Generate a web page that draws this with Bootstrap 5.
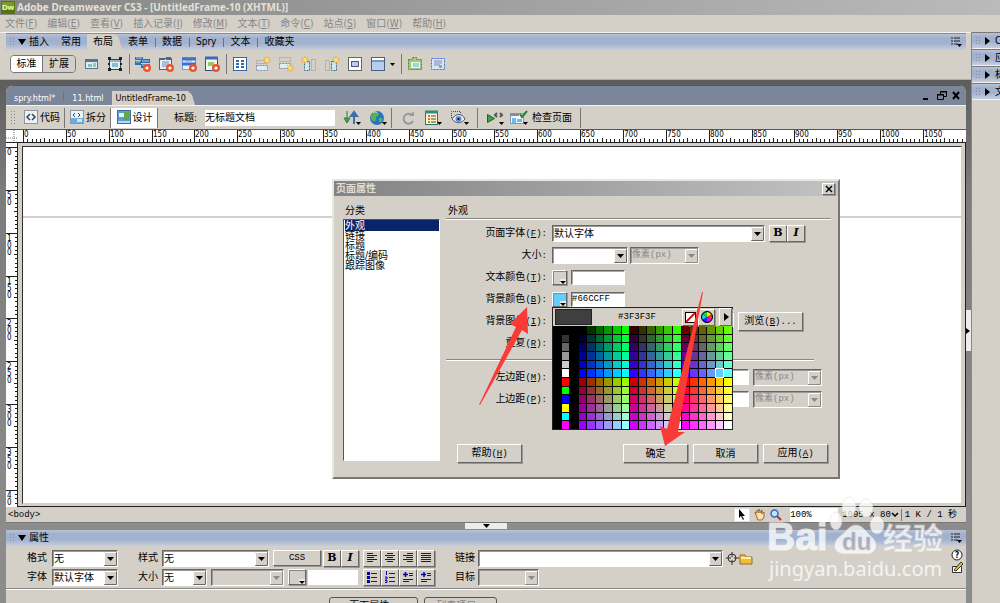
<!DOCTYPE html>
<html lang="zh-CN">
<head>
<meta charset="utf-8">
<meta name="viewport" content="width=device-width, initial-scale=1">
<title>Adobe Dreamweaver CS3</title>
<link rel="stylesheet" href="https://cdn.jsdelivr.net/npm/bootstrap@5.3.0/dist/css/bootstrap.min.css">
<style>
:root{--face:#d4d0c8;--blue:linear-gradient(#b9c3d6,#a1b0cc 25%,#a3b2ce 60%,#c5cee0)}
body{font:10px/14px "DejaVu Sans Condensed","Noto Sans CJK SC",sans-serif;color:#000;background:var(--face);height:100vh;min-width:1000px;overflow:hidden}
button,input,select{font:inherit;line-height:14px;color:#000;padding:0;border-radius:0}
svg{display:block;flex:none}
.mn{font-family:"Liberation Mono","Noto Sans CJK SC",monospace;font-size:9px}
.app-title{height:15px;background:linear-gradient(90deg,#868686,#bababa);color:#e4e1da;font:bold 10px/15px "Noto Sans",sans-serif}
.app-menu{height:17px;gap:10px;padding-left:5px}
.app-menu a{color:#868686;text-decoration:none}
.grip{width:5px;height:10px;background:radial-gradient(circle,#7f8ba3 1px,transparent 1px) 0 0/3px 3px}
.grip.tall{height:16px}
.bar-blue{height:17px;background:var(--blue);border-top:1px solid #8b8b8b}
.panel-name{gap:3px;padding:0 6px 0 3px}
.insert-wrap{border-top:1px solid #f4f2ee;border-bottom:1px solid #b2aea6;padding:0 5px 0 6px}
.insert-tools{height:27px;gap:7px;margin-bottom:2px}
.insert-tools .tool-sep{margin:0 -2px 0 -1px}
.ptab{padding:0 6px;color:#000;text-decoration:none;line-height:16px;height:16px}
.ptab.slant{padding-right:9px}
.bar-sep{width:1px;height:9px;background:#68738a}
.bar-blue .bar-sep{margin:0 0 0 1px}
.slant{background:var(--face);clip-path:polygon(0 0,calc(100% - 7px) 0,calc(100% - 3px) 4px,100% 100%,0 100%)}
.pill-group{border:1px solid #777;border-radius:4px;overflow:hidden;margin-right:1px}
.pill-group button{border:0;width:32px;height:16px;background:var(--face)}
.pill-group button.on{background:#fff;border-right:1px solid #777}
.tool-sep{width:1px;height:20px;background:#777}
.icon-btn{border:0;background:none;width:16px;height:16px}
.workspace{background:linear-gradient(#5d5d5d,#7c7c7c 25%,#8c8c8c);padding:5px 5px 0 6px}
.doc{background:var(--face);border-radius:8px 8px 0 0;overflow:hidden}
.doc-tabs{background:#7b869b;height:20px;color:#fff;border-top:1px solid #555}
.doc-tabs a{color:#fff;text-decoration:none;font-size:9px;line-height:14px}
.doc-tabs a.slant{color:#000;padding:0 9px 0 4px;height:14px}
.doc-tools{height:24px;border-top:1px solid #f4f2ee}
.view-btn{border:0;border-right:1px solid #777;background:var(--face);height:20px;width:46px;gap:1px}
.view-btn.on{background:#fff;width:47px}
.title-box{width:130px;height:16px;border:0;background:#fff;padding-bottom:3px}
.ruler-h{height:14px;background:#fff;border-top:1px solid #555;border-bottom:1px solid #222}
.ruler-v{width:12px;background:#fff;flex:none;border-right:1px solid #222}
.canvas{border:1px solid #222;border-color:#333 var(--face) var(--face) #333;margin:3px 3px 2px 4px}
.canvas-edge{border-right:1px solid #222;border-bottom:1px solid #222;background:var(--face)}
.frame-top{height:71px;border-bottom:2px solid var(--face)}
.status{height:16px;border-bottom:1px solid #777}
.handle-h{width:42px;height:6px;background:#ececec}
.handle-v{position:absolute;right:0;top:230px;width:6px;height:41px;background:#ececec;color:#000}
.side{width:29px;background:var(--face);border-left:1px solid #888;overflow:hidden}
.side button{width:100%;border:0;border-top:1px solid #777;border-bottom:1px solid #f4f2ee;height:17px;background:var(--blue);gap:5px;padding-left:3px;white-space:nowrap}
/* classic bevelled controls */
.raised,.box3{border:1px solid;border-color:#fff #666 #666 #fff;background:var(--face);box-shadow:1px 1px 0 #999}
.box3{border-color:#666 #fff #fff #666;background:#fff;box-shadow:inset 1px 1px 0 #aaa}
.combo{appearance:none;border:1px solid;border-color:#666 #fff #fff #666;box-shadow:inset 1px 1px 0 #999;height:17px;line-height:13px;padding-left:1px;background:#fff url("data:image/svg+xml,%3Csvg xmlns='http://www.w3.org/2000/svg' width='13' height='14'%3E%3Cpath fill='%23d4d0c8' stroke='%23666' d='M.5.5h12v13H.5z'/%3E%3Cpath fill='none' stroke='%23fff' d='M.5 13V.5H12'/%3E%3Cpath d='M3 5h7L6.5 9z'/%3E%3C/svg%3E") right 0 top 1px no-repeat}
.combo:disabled{opacity:1;color:#888;background-color:var(--face);background-image:url("data:image/svg+xml,%3Csvg xmlns='http://www.w3.org/2000/svg' width='13' height='14'%3E%3Cpath fill='%23d4d0c8' stroke='%23888' d='M.5.5h12v13H.5z'/%3E%3Cpath fill='none' stroke='%23fff' d='M.5 13V.5H12'/%3E%3Cpath fill='%23888' d='M3 5h7L6.5 9z'/%3E%3C/svg%3E")}
.bi-btn{width:18px;height:17px;font:bold 11px/14px "DejaVu Serif","Liberation Serif",serif}
.swatch-btn{width:15px;height:15px;position:relative;background:var(--sw,var(--face));box-shadow:inset 1px 1px 0 #888,1px 1px 0 #999}
.swatch-btn::after{content:"";position:absolute;right:0;bottom:0;width:6px;height:5px;background:#eceae5}
.swatch-btn::before{content:"";position:absolute;z-index:1;right:0;bottom:0;border:3px solid transparent;border-top-color:#000;border-bottom:0}
/* page properties dialog */
.dlg{position:absolute;left:326px;top:36px;width:508px;border:2px solid;border-color:#e8e6e1 #777 #777 #e8e6e1;background:var(--face)}
.dlg-title{height:15px;background:linear-gradient(90deg,#838383,#c2c2c2);color:#e0ddd6;font-weight:bold;line-height:15px;padding:0 3px 0 2px}
.dlg-close{width:13px;height:12px}
.dlg-body{padding:8px 7px 0 9px;gap:6px}
.cap{padding-left:2px}
.cats{width:97px;height:242px;background:#fff;border:1px solid;border-color:#555 #fff #fff #555;padding:0 0 0 1px}
.cats button{border:0;padding:0;background:none;height:10px;line-height:10px;text-align:left}
.cats button.active{background:#0a246a;color:#fff;height:11px}
.rule{height:2px;border-top:1px solid #888;border-bottom:1px solid #fff}
.form-line{display:grid;grid-template-columns:101px 1fr;column-gap:5px;height:22px;align-items:center}
.form-line>label{text-align:right}
.dlg-btn{width:65px;height:19px;line-height:16px}
.pal{position:absolute;left:218px;top:126px;width:181px;border:1px solid #222;background:var(--face);z-index:2}
.pal-head{height:18px;padding-left:2px}
.pal-grid{background:#000;display:grid;grid-template-columns:repeat(21,1fr);grid-template-rows:repeat(12,1fr);gap:1px;height:103px}
.pal-grid .sel{outline:1px solid #fff}
.arrows{position:absolute;left:139px;top:111px;z-index:3;pointer-events:none}
/* properties panel */
.props{margin:0 5px -17px 6px;background:var(--face)}
.props-wrap{background:#8c8c8c;flex:none}
.pgrid{display:grid;grid-template-rows:18px 18px;row-gap:1px;align-items:center}
.rbtn{height:17px;border-radius:3px;border:1px solid #555;background:var(--face)}
.brand{position:absolute;right:53px;bottom:19px;width:180px;opacity:.75;z-index:5;pointer-events:none}
</style>
</head>
<body class="d-flex flex-column position-relative">
<svg width="0" height="0" class="position-absolute" aria-hidden="true">
<defs>
<g id="plus"><circle cx="12" cy="12" r="4" fill="#e8552f"/><circle cx="12" cy="12" r="1.6" fill="#fff"/></g>
<g id="star"><path d="M12 0v8M8 4h8M9 1l6 6M15 1L9 7" stroke="#e9a93a"/><circle cx="12" cy="4" r="2" fill="#ffe06a"/></g>
<g id="menuico"><path d="M0 1h2M0 4h2M0 7h2M3 1h6M3 4h6M3 7h4" stroke="#222"/><path d="M6 7h5L8.500 10z"/></g>
</defs></svg>

<header class="app-title d-flex align-items-center flex-shrink-0">
<svg width="15" height="14" viewBox="0 0 15 14"><rect x="1" width="14" height="13" fill="#55750e"/><rect x="2" y="1" width="12" height="7" fill="#7d9b1e"/><text x="2" y="9" font-family="Liberation Sans" font-size="8" font-weight="bold" fill="#f1ffb5">Dw</text></svg>
<span style="margin-left:2px">Adobe Dreamweaver CS3 - [UntitledFrame-10 (XHTML)]</span></header>
<nav class="app-menu d-flex align-items-center flex-shrink-0" id="menu"></nav>

<div class="d-flex flex-grow-1" style="min-height:0">
<main class="flex-grow-1 d-flex flex-column" style="min-width:0">
<section class="insert-wrap flex-shrink-0">
 <div class="bar-blue d-flex align-items-center">
  <div class="panel-name d-flex align-items-center"><span class="grip"></span><svg width="9" height="6"><path d="M1 0h8L5 6z"/></svg><span>插入</span></div>
  <a href="#" class="ptab">常用</a>
  <a href="#" class="ptab slant">布局</a>
  <a href="#" class="ptab">表单</a><i class="bar-sep"></i>
  <a href="#" class="ptab">数据</a><i class="bar-sep"></i>
  <a href="#" class="ptab">Spry</a><i class="bar-sep"></i>
  <a href="#" class="ptab">文本</a><i class="bar-sep"></i>
  <a href="#" class="ptab">收藏夹</a>
  <svg class="ms-auto me-1" width="11" height="10"><use href="#menuico"/></svg>
 </div>
 <div class="insert-tools d-flex align-items-center ps-1">
  <div class="pill-group d-flex"><button class="on">标准</button><button>扩展</button></div>
  <svg width="16" height="16"><rect x="1.500" y="3.500" width="12" height="9" fill="#dff0f5" stroke="#55768b"/><path d="M2 5h11" stroke="#55768b" stroke-width="2"/><path d="M4 8h4v3H4z" fill="#7fc2d0"/><path d="M9 8h3M9 10h3" stroke="#689a42"/></svg>
  <svg width="16" height="16"><rect x="2.500" y="3.500" width="11" height="10" fill="#dff0f5" stroke="#345"/><path d="M1 1h3v3H1zM12 1h3v3h-3zM1 12h3v3H1zM12 12h3v3h-3zM1 7h2v2H1zM13 7h2v2h-2z" fill="#222"/><path d="M5 7h6v4H5z" fill="#86bfca"/><path d="M3 5h10" stroke="#55768b"/></svg>
  <i class="tool-sep"></i>
  <svg width="16" height="16"><path fill="#2d6da6" d="M0 1h8v3H0zM6 3h9v4H6zM0 5h6v4H0zM6 8h9v4H6z"/><path d="M1 2h6M1 6h4M7 5h7M7 9h7" stroke="#a8d3f5"/><use href="#plus"/></svg>
  <svg width="16" height="16"><rect x="1.500" y="2.500" width="12" height="11" fill="#e5edf6" stroke="#456393"/><path d="M2 2h5v2H2zM8 1h5v3H8z" fill="#567"/><path d="M4 6h7M4 8h7M4 10h5" stroke="#7390bb"/><use href="#plus"/></svg>
  <svg width="16" height="16"><rect x="1.500" y="1.500" width="13" height="12" fill="#eaf2fd" stroke="#6d9be0"/><path d="M1 3h14M1 8h14" stroke="#3b71c9" stroke-width="3"/><path d="M4 5h7" stroke="#69b"/><use href="#plus"/></svg>
  <svg width="16" height="16"><rect x="1.500" y="1.500" width="12" height="13" fill="#eef5ea" stroke="#2e4f8e"/><path d="M1 2h13" stroke="#3d6ac0" stroke-width="3"/><path d="M4 6h6v4H4z" fill="#9dc46b"/><use href="#plus"/></svg>
  <i class="tool-sep"></i>
  <svg width="16" height="16"><rect x="1.500" y="1.500" width="13" height="13" fill="#fff" stroke="#3568ab"/><path d="M4 5h3M9 5h3M4 8h3M9 8h3M4 11h3M9 11h3" stroke="#3568ab" stroke-width="2"/></svg>
  <svg width="16" height="16"><path d="M1.500 4.500h9v3h-9z" fill="none" stroke="#999" stroke-dasharray="1"/><path d="M1.500 9.500h11v5h-11z" fill="#dbeef4" stroke="#88a" stroke-dasharray="2 1"/><use href="#star"/></svg>
  <svg width="16" height="16"><path d="M1.500 1.500h11v4h-11z" fill="none" stroke="#999" stroke-dasharray="1"/><path d="M1.500 7.500h11v5h-11z" fill="#dbeef4" stroke="#88a" stroke-dasharray="2 1"/><use href="#star" y="8"/></svg>
  <svg width="16" height="16"><path d="M10.500 3.500h4v11h-4z" fill="none" stroke="#999" stroke-dasharray="1"/><path d="M3.500 5.500h5v9h-5z" fill="#c7eaf4" stroke="#567" stroke-dasharray="2 1"/><use href="#star" x="-8"/></svg>
  <svg width="16" height="16"><path d="M1.500 4.500h4v10h-4z" fill="none" stroke="#999" stroke-dasharray="1"/><path d="M7.500 5.500h5v9h-5z" fill="#c7eaf4" stroke="#567" stroke-dasharray="2 1"/><use href="#star"/></svg>
  <svg width="16" height="16"><rect x="1.500" y="1.500" width="13" height="13" fill="#fff" stroke="#666"/><rect x="4.500" y="5.500" width="7" height="5" fill="#b6cdf1" stroke="#557"/></svg>
  <svg width="25" height="16"><rect x="1.500" y="1.500" width="13" height="13" fill="#b4cdf1" stroke="#4a5f85"/><path d="M2 3h12" stroke="#fff" stroke-width="2"/><path d="M1 5h14" stroke="#4a5f85"/><path d="M20 7h5l-2.500 3z"/></svg>
  <i class="tool-sep"></i>
  <svg width="16" height="16"><path d="M1.500 3.500h4v-2h4v2h5v10h-13z" fill="#a4c97c" stroke="#55822f" stroke-dasharray="2 1"/><path d="M4 6h9v6H4z" fill="#dff7f7"/><path d="M6 8h6M6 10h6" stroke="#65aebc"/></svg>
  <svg width="16" height="16"><path d="M1.500 2.500h13v11h-13z" fill="#d9e4f8" stroke="#3d6ee6" stroke-dasharray="2 1"/><path d="M4 5h8M4 7h8M4 9h6" stroke="#88a"/><path d="M9 9h3v3H9z" fill="#89b55a"/></svg>
 </div>
</section>

<section class="workspace flex-grow-1 d-flex flex-column position-relative" style="min-height:0">
<div class="handle-v d-flex align-items-center"><svg width="6" height="8"><path d="M1 1v6l4-3z"/></svg></div>
<div class="doc flex-grow-1 d-flex flex-column" style="min-height:0">
 <div class="doc-tabs d-flex align-items-end flex-shrink-0">
  <a href="#" class="ps-2">spry.html*</a><i class="bar-sep mx-2 mb-1"></i><a href="#" class="me-2">11.html</a><a href="#" class="slant">UntitledFrame-10</a>
  <svg class="ms-auto me-1 mb-1" width="40" height="11"><path d="M1 9h5" stroke="#000" stroke-width="2"/><path d="M18.500 4V1.500h6v5H22M15.500 4.500h6v5h-6zM15 5h7M18 2h7" fill="none" stroke="#000"/><path d="M31 2l6 7M37 2l-6 7" stroke="#000" stroke-width="2"/></svg>
 </div>
 <div class="doc-tools d-flex align-items-center flex-shrink-0">
  <span class="grip tall mx-1 flex-shrink-0"></span>
  <button class="view-btn d-flex align-items-center justify-content-center"><svg width="16" height="15"><rect x="1.500" y=".500" width="13" height="13" fill="#edf2f8" stroke="#8b97a5"/><path d="M7 4L4 7l3 3M9 4l3 3-3 3" fill="none" stroke="#345" stroke-width="1.500"/></svg>代码</button>
  <button class="view-btn d-flex align-items-center justify-content-center"><svg width="16" height="15"><rect x="1.500" y=".500" width="13" height="13" fill="#edf2f8" stroke="#8b97a5"/><path d="M6 3L4 5l2 2M9 3l2 2-2 2" fill="none" stroke="#345"/><path d="M2 8h12v5H2z" fill="#68aede"/><path d="M8 9h5v3H8z" fill="#d9edc9"/></svg>拆分</button>
  <button class="view-btn on d-flex align-items-center justify-content-center"><svg width="16" height="15"><rect x="1.500" y=".500" width="13" height="13" fill="#5ba0d8" stroke="#3a6da8"/><path d="M7 2h6v8H7z" fill="#5fa84e"/><path d="M3 3h5v4H3z" fill="#e8f4fb"/><path d="M2 11h12v2H2z" fill="#b7dcf4"/></svg>设计</button>
  <label class="ms-3" for="ttl">标题:</label><input id="ttl" class="title-box mx-2" value="无标题文档">
  <svg width="18" height="16"><path d="M4 1v10M1 8l3 5 3-5z" stroke="#2f7a3a" fill="#63b262"/><path d="M11 4v10M8 6l3-4 3 4z" stroke="#3c6fa9" stroke-width="2" fill="#5e96cf"/><path d="M13 12h5l-2.500 3z"/></svg>
  <svg class="ms-2" width="18" height="16"><circle cx="8" cy="8" r="7" fill="#2673c4"/><path d="M3 4c3-3 6-2 7 0s-4 2-3 4-1 4-3 3-3-5-1-7zM10 8c3-1 4 0 3 3s-4 1-3-3" fill="#58b44e"/><path d="M4 3c2-2 4-1 4 0" stroke="#cfe8ff" fill="none"/><path d="M13 12h5l-2.500 3z"/></svg>
  <i class="tool-sep ms-1 me-2"></i>
  <svg width="16" height="16"><path d="M12 5a5 5 0 1 0 1 6" fill="none" stroke="#999" stroke-width="2"/><path d="M9 6h5V1z" fill="#999"/></svg>
  <svg class="ms-2" width="18" height="16"><rect x="1.500" y="1.500" width="12" height="13" fill="#fff6cd" stroke="#2b7378"/><path d="M1 2h13" stroke="#2b8a8e" stroke-width="3"/><path d="M4 6h2M4 9h2M4 12h2" stroke="#c37a28" stroke-width="2"/><path d="M7 6h5M7 9h5M7 12h5" stroke="#444"/><path d="M13 12h5l-2.500 3z"/></svg>
  <svg class="ms-2" width="19" height="16"><path d="M1.500 8V1.500h9V5" fill="none" stroke="#444" stroke-dasharray="1"/><path d="M2 9c4-6 10-6 13 0-4 5-9 5-13 0z" fill="#e8effa" stroke="#555"/><circle cx="8.500" cy="9" r="3" fill="#5a8bdc"/><circle cx="8.500" cy="9" r="1"/><path d="M14 12h5l-2.500 3z"/></svg>
  <i class="tool-sep mx-2"></i>
  <svg width="19" height="16"><path d="M1.500 4.500v8l7-4z" fill="#3da344" stroke="#255f2a"/><path d="M11 3L9 5l2 2M14 3l2 2-2 2" fill="none" stroke="#555" stroke-width="2"/><path d="M13 12h5l-2.500 3z"/></svg>
  <svg class="ms-1 me-1" width="19" height="16"><rect x="1.500" y="3.500" width="13" height="10" fill="#f2f8fc" stroke="#8198aa"/><path d="M2 5h8" stroke="#889" stroke-width="2"/><path d="M3 8h4v5H3zM8 9h5v3H8z" fill="#68bbef"/><path d="M11 4l2 3 5-6" fill="none" stroke="#248535" stroke-width="2"/><path d="M14 12h5l-2.500 3z"/></svg>
  <span>检查页面</span><i class="tool-sep ms-2"></i>
 </div>
 <div class="ruler-h flex-shrink-0"><svg id="rh" width="100%" height="12"></svg></div>
 <div class="flex-grow-1 d-flex position-relative" style="min-height:0">
  <div class="ruler-v overflow-hidden"><svg id="rv" width="11" height="100%"></svg></div>
  <div class="canvas-edge flex-grow-1 d-flex"><div class="canvas flex-grow-1 bg-white"><div class="frame-top"></div></div></div>

  <section class="dlg" role="dialog" aria-label="页面属性">
   <div class="dlg-title d-flex align-items-center justify-content-between"><span>页面属性</span>
    <button class="raised dlg-close d-flex align-items-center justify-content-center" aria-label="关闭"><svg width="8" height="8"><path d="M1 1l6 6M7 1L1 7" stroke="#000" stroke-width="1.500"/></svg></button></div>
   <div class="dlg-body d-flex">
    <div><div class="cap">分类</div>
     <div class="cats d-flex flex-column" style="margin-top:1px"><button class="active">外观</button><button>链接</button><button>标题</button><button>标题/编码</button><button>跟踪图像</button></div>
    </div>
    <div class="flex-grow-1"><div class="cap">外观</div><div class="rule" style="margin-bottom:2px"></div>
     <div class="form-line"><label for="f1">页面字体<span class="mn">(<u>F</u>):</span></label><div class="d-flex align-items-center"><select id="f1" class="combo" style="width:213px"><option>默认字体</option></select><button class="raised bi-btn ms-1">B</button><button class="raised bi-btn fst-italic">I</button></div></div>
     <div class="form-line"><label for="f2">大小<span class="mn">:</span></label><div class="d-flex"><select id="f2" class="combo" style="width:76px"><option></option></select><select class="combo mn" aria-label="单位" disabled style="width:69px;margin-left:2px"><option>像素(px)</option></select></div></div>
     <div class="form-line"><label for="f3">文本颜色<span class="mn">(<u>T</u>):</span></label><div class="d-flex"><button class="raised swatch-btn" aria-label="文本颜色"></button><input id="f3" class="box3 ms-1" style="width:54px;height:15px"></div></div>
     <div class="form-line"><label for="f4">背景颜色<span class="mn">(<u>B</u>):</span></label><div class="d-flex"><button class="raised swatch-btn" style="--sw:#66ccff" aria-label="背景颜色"></button><input id="f4" class="box3 mn ms-1" value="#66CCFF" style="width:54px;height:15px"></div></div>
     <div class="form-line"><label for="f5">背景图像<span class="mn">(<u>I</u>):</span></label><div class="d-flex"><input id="f5" class="box3" style="width:182px;height:16px"><button class="raised dlg-btn ms-1">浏览<span class="mn">(<u>B</u>)...</span></button></div></div>
     <div class="form-line"><label for="f6">重复<span class="mn">(<u>R</u>):</span></label><select id="f6" class="combo" style="width:110px"><option></option></select></div>
     <div class="rule" style="margin:5px 17px 5px 0"></div>
     <div class="form-line"><label for="f7">左边距<span class="mn">(<u>M</u>):</span></label><div class="d-flex"><input id="f7" class="box3" style="width:197px;height:16px"><select class="combo mn ms-1" aria-label="左边距单位" disabled style="width:69px"><option>像素(px)</option></select></div></div>
     <div class="form-line"><label for="f8">上边距<span class="mn">(<u>P</u>):</span></label><div class="d-flex"><input id="f8" class="box3" style="width:197px;height:16px"><select class="combo mn ms-1" aria-label="上边距单位" disabled style="width:69px"><option>像素(px)</option></select></div></div>
     <div class="d-flex" style="margin:34px 3px 14px 11px;gap:5px"><button class="raised dlg-btn me-auto">帮助<span class="mn">(<u>H</u>)</span></button><button class="raised dlg-btn">确定</button><button class="raised dlg-btn">取消</button><button class="raised dlg-btn">应用<span class="mn">(<u>A</u>)</span></button></div>
    </div>
   </div>
   <div class="pal">
    <div class="pal-head d-flex align-items-center"><div style="width:37px;height:16px;background:#3f3f3f;border:1px solid #222"></div><span class="mn mx-auto">#3F3F3F</span>
     <button class="raised d-flex align-items-center justify-content-center" style="width:16px;height:17px" aria-label="无颜色"><svg width="11" height="11"><rect x=".500" y=".500" width="10" height="10" fill="#fff" stroke="#000"/><path d="M1 10l9-9" stroke="#d01010" stroke-width="2"/></svg></button>
     <button class="raised d-flex align-items-center justify-content-center me-1" style="width:17px;height:17px" aria-label="系统颜色"><svg width="12" height="12" viewBox="-6 -6 12 12"><circle r="5.500" stroke="#000"/><path d="M0 0V-5A5 5 0 0 1 4.300-2.500z" fill="#ffec00"/><path d="M0 0L4.300-2.500A5 5 0 0 1 4.300 2.500z" fill="#f33"/><path d="M0 0L4.300 2.500A5 5 0 0 1 0 5z" fill="#e0f"/><path d="M0 0V5A5 5 0 0 1-4.300 2.500z" fill="#22f"/><path d="M0 0L-4.300 2.500A5 5 0 0 1-4.300-2.500z" fill="#0df"/><path d="M0 0L-4.300-2.500A5 5 0 0 1 0-5z" fill="#1d3"/></svg></button>
     <button class="raised d-flex align-items-center justify-content-center" style="width:13px;height:18px" aria-label="更多"><svg width="6" height="8"><path d="M1 0v8l5-4z"/></svg></button></div>
    <div class="pal-grid" id="pal"></div>
   </div>
   <svg class="arrows" width="240" height="160"><path d="M6 113L43 35 37 32 54 15 55 42 49 38 7 113z" fill="#f93a37"/><path d="M230 0L205 140 212 140 192 154 187 134 194 137 229 0z" fill="#f93a37"/></svg>
  </section>
 </div>
 <div class="status d-flex align-items-center flex-shrink-0"><a href="#" class="mn text-black text-decoration-none me-auto" style="padding-left:2px">&lt;body&gt;</a>
  <button class="icon-btn bg-white border d-flex align-items-center justify-content-center" style="height:14px" aria-label="选取"><svg width="8" height="11"><path d="M1 0v9l2-2 2 4 1-1-2-3h3z"/></svg></button>
  <svg class="ms-1" width="12" height="12"><path d="M2 6L1 3l2 1V1l2 3V0l2 4 1-3v4l2-2v5L8 11H4z" fill="#ffdfb0" stroke="#9a6428"/></svg>
  <svg class="mx-1" width="12" height="12"><path d="M7 7l4 4" stroke="#a33" stroke-width="2"/><circle cx="4.500" cy="4.500" r="3.500" fill="#bfe2ff" stroke="#3567bd" stroke-width="1.500"/></svg>
  <select class="mn border-0 bg-white ms-1" style="appearance:none;width:48px;height:14px" aria-label="缩放"><option>100%</option></select>
  <span class="mn ms-1">1095 x 80</span><svg width="8" height="5"><path d="M1 1l3 3 3-3" fill="none" stroke="#000" stroke-width="1.500"/></svg><i class="tool-sep" style="height:12px;margin:0 3px 0 2px"></i><span class="mn" style="padding-right:9px">1 K / 1 秒</span>
 </div>
</div>
</section>

<section class="props-wrap">
 <div class="d-flex justify-content-center"><div class="handle-h d-flex justify-content-center"><svg width="8" height="6"><path d="M1 1h7L4.500 5z"/></svg></div></div>
 <div class="props">
  <div class="bar-blue d-flex align-items-center"><div class="panel-name d-flex align-items-center"><span class="grip"></span><svg width="9" height="6"><path d="M1 0h8L5 6z"/></svg><span>属性</span></div><svg class="ms-auto me-1" width="11" height="10"><use href="#menuico"/></svg></div>
  <div class="d-flex" style="padding:3px 3px 2px 21px;gap:20px">
   <div class="pgrid" style="grid-template-columns:20px 66px;column-gap:5px"><label for="p1">格式</label><select id="p1" class="combo"><option>无</option></select><label for="p2">字体</label><select id="p2" class="combo"><option>默认字体</option></select></div>
   <div class="pgrid">
    <div class="d-flex align-items-center"><label for="p3">样式</label><select id="p3" class="combo ms-1" style="width:107px"><option>无</option></select><button class="raised mn ms-1" style="width:48px;height:16px">CSS</button><button class="raised bi-btn" style="margin-left:2px">B</button><button class="raised bi-btn fst-italic me-1">I</button><span class="d-flex" id="al"></span></div>
    <div class="d-flex align-items-center"><label for="p4">大小</label><select id="p4" class="combo ms-1" style="width:45px"><option>无</option></select><select class="combo ms-1" disabled aria-label="单位" style="width:73px"><option></option></select><button class="raised swatch-btn ms-1" style="width:18px;height:16px" aria-label="颜色"></button><input class="border-0 bg-white" aria-label="颜色值" style="width:50px;height:15px;margin-left:2px"><span class="d-flex ms-auto" id="li"></span></div>
   </div>
   <div class="pgrid" style="grid-template-columns:20px 245px auto;column-gap:3px"><label for="p5">链接</label><select id="p5" class="combo"><option></option></select>
    <span class="d-flex"><svg width="13" height="13"><circle cx="6" cy="6" r="4" fill="none" stroke="#333"/><path d="M6 0v5M6 8v5M0 6h5M8 6h5" stroke="#333"/></svg><svg width="14" height="13"><path d="M1 3h5l1 2h6v7H1z" fill="#f2bd3d" stroke="#9a7118"/><path d="M2 6h10" stroke="#ffeaa0" stroke-width="2"/></svg></span>
    <label for="p6">目标</label><select id="p6" class="combo" disabled style="width:61px"><option></option></select></div>
   <div class="ms-auto"><svg width="12" height="12"><circle cx="6" cy="6" r="5" fill="#fff" stroke="#222"/><text x="4" y="9" font-size="8" font-weight="bold">?</text></svg><svg width="12" height="13"><path d="M1.500 5.500h9v6h-9z" fill="#fff" stroke="#333"/><path d="M3 9l7-8 2 2-7 7z" fill="#e8c229" stroke="#333"/></svg></div>
  </div>
  <div class="rule"></div>
  <div class="d-flex" style="padding:7px 0 6px 323px;gap:6px"><button class="rbtn" style="width:89px">页面属性...</button><button class="rbtn" disabled style="width:73px;color:#888">列表项目...</button></div>
 </div>
</section>
</main>
<aside class="side flex-shrink-0" id="side"></aside>
</div>

<svg class="brand" viewBox="0 0 180 92" height="92" fill="#fff" stroke="#cfcfcf" stroke-width=".500" aria-label="Baidu 经验">
<text x="0" y="58" font-family="Liberation Sans" font-weight="bold" font-size="39" stroke="#fff" stroke-width="1">Bai</text>
<ellipse cx="82" cy="15" rx="7" ry="10"/><ellipse cx="99" cy="16" rx="7" ry="9"/><ellipse cx="69" cy="29" rx="6" ry="9"/><ellipse cx="110" cy="33" rx="7" ry="9"/>
<path d="M89 33c7 0 10 7 16 12 7 6 5 17-5 17H78c-11 0-14-10-6-17 7-5 10-12 17-12z"/>
<text x="75" y="58" font-family="Liberation Sans" font-weight="bold" font-size="24" fill="#a7aab4">du</text>
<text x="116" y="57" font-family="Noto Sans CJK SC" font-weight="bold" font-size="30">经验</text>
<text x="2" y="84" font-family="Noto Sans" font-size="20" stroke="none">jingyan.baidu.com</text>
</svg>

<script src="https://cdn.jsdelivr.net/npm/bootstrap@5.3.0/dist/js/bootstrap.bundle.min.js"></script>
<script>
const $ = id => document.getElementById(id);
$('menu').innerHTML = [['文件','F'],['编辑','E'],['查看','V'],['插入记录','I'],['修改','M'],['文本','T'],['命令','C'],['站点','S'],['窗口','W'],['帮助','H']]
  .map(([t,k]) => `<a href="#">${t}(<u>${k}</u>)</a>`).join('');
$('side').innerHTML = ['C','应','标','文'].map(t => `<button class="d-flex align-items-center"><span class="grip flex-shrink-0"></span><svg width="5" height="8"><path d="M0 0v8l5-4z"/></svg>${t}</button>`).join('');

// rulers: 50 document pixels per major step, ten ticks in each step
const step = 300 / 7, tick = step / 10;
let h = '<path d="M0 8h12M8 0v12" stroke="#777" stroke-dasharray="1"/>', v = '';
for (let i = 0; i < 220; i++) {
  const x = 17 + Math.round(i * tick), y = 4 + Math.round(i * tick), len = i % 10 ? (i % 5 ? 3 : 4) : 12;
  h += `<path d="M${x}.5 ${12 - len}v${len}" stroke="#222"/>`;
  if (i % 10 === 0) h += `<text x="${x + 1}" y="7" font-size="8">${i * 5}</text>`;
  if (i < 84) {
    v += `<path d="M${12 - len} ${y}.5h${len}" stroke="#222"/>`;
    if (i % 10 === 0) [...String(i * 5)].slice(0, i === 80 ? 2 : 3).forEach((c, n) => v += `<text x="1" y="${y + 8 + n * 7}" font-size="8">${c}</text>`);
  }
}
$('rh').innerHTML = h; $('rv').innerHTML = v;

// web-safe palette: grey and primary column, then the 216-colour cube
const hex = ['00','33','66','99','CC','FF'];
const first = ['#000','#333','#666','#999','#ccc','#fff','#f00','#0f0','#00f','#ff0','#0ff','#f0f'];
let cells = '';
for (let r = 0; r < 12; r++) for (let c = 0; c < 21; c++) {
  let col = '#000';
  if (c === 1) col = first[r];
  if (c > 2) { const k = c - 3; col = '#' + hex[Math.floor(k / 6) + (r > 5 ? 3 : 0)] + hex[k % 6] + hex[r % 6]; }
  cells += `<i class="${col === '#66CCFF' ? 'sel' : ''}" style="background:${col}"></i>`;
}
$('pal').innerHTML = cells;

const btn = (d, e = '') => `<button class="raised bi-btn d-flex align-items-center justify-content-center"><svg width="12" height="12" fill="none" stroke="#222"><path d="${d}"/>${e}</svg></button>`;
$('al').innerHTML = btn('M1 1.5h6M1 3.500h10M1 5.500h7M1 7.500h10M1 9.500h6') + btn('M3 1.500h6M1 3.500h10M3 5.500h6M1 7.500h10M3 9.500h6') + btn('M5 1.500h6M1 3.500h10M4 5.500h7M1 7.500h10M5 9.500h6') + btn('M1 1.500h10M1 3.500h10M1 5.500h10M1 7.500h10M1 9.500h10');
$('li').innerHTML = btn('M5 2.500h6M5 6.500h6M5 10.500h6','<path d="M1 2.500h3M1 6.500h3M1 10.500h3" stroke="#00a" stroke-width="3"/>') + btn('M5 2.500h6M5 6.500h6M5 10.500h6','<path d="M2.500 0v4M1 6h2v2H1M1 9.500h2v2H1" stroke="#00a"/>') + btn('M7 2.500h4M7 4.500h4M1 8.500h10M1 10.500h6','<path d="M1 3.500h5M3.500 1v5" stroke="#00a" stroke-width="1.500"/>') + btn('M7 2.500h4M7 4.500h4M1 8.500h10M1 10.500h6','<path d="M1 3.500h5M4 1v5" stroke="#00a" stroke-width="1.500"/>');
</script>
</body>
</html>
